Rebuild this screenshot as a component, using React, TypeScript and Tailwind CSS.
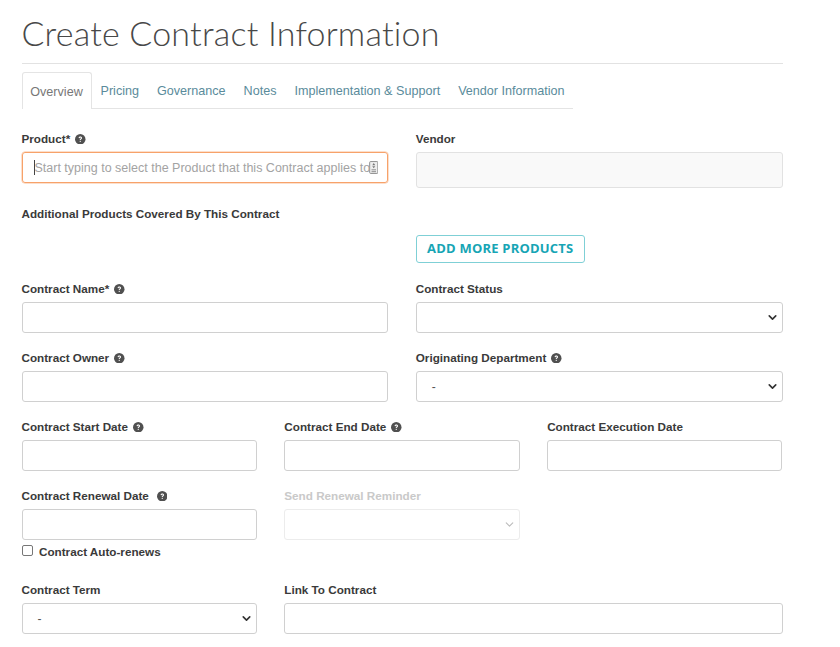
import { ChevronDown } from 'lucide-react';

function Help({ className = '' }: { className?: string }) {
  return (
    <svg viewBox="0 0 16 16" className={`w-[10.5px] h-[10.5px] ${className}`}>
      <circle cx="8" cy="8" r="8" fill="#505050" />
      <path d="M5.4 6.2c0-1.5 1.2-2.4 2.7-2.4s2.6.9 2.6 2.2c0 1.9-2 1.9-2 3.2H7.2c0-2 1.8-2.1 1.8-3.1 0-.5-.4-.8-.9-.8-.6 0-1 .4-1 1z" fill="#fff" />
      <rect x="7.2" y="10.4" width="1.6" height="1.7" fill="#fff" />
    </svg>
  );
}

function Label({ text, help, gap = 'ml-[5px]', disabled }: { text: string; help?: boolean; gap?: string; disabled?: boolean }) {
  return (
    <div className={`h-[14px] flex items-center text-[11.7px] font-bold leading-none ${disabled ? 'text-[#c9c9c9]' : 'text-[#3a3a3a]'}`}>
      {text}
      {help && <Help className={gap} />}
    </div>
  );
}

function Input() {
  return <div className="mt-[6px] h-[31px] rounded-[3px] border border-[#d0d0d0] bg-white" />;
}

function Select({ value, disabled }: { value?: string; disabled?: boolean }) {
  return (
    <div className={`mt-[6px] h-[31px] rounded-[3px] border flex items-center justify-between pl-[15px] pr-[3px] text-[12px] ${disabled ? 'border-[#ececec]' : 'border-[#d0d0d0]'} text-[#555]`}>
      <span>{value}</span>
      <ChevronDown className={`w-[13px] h-[13px] ${disabled ? 'text-[#bbb]' : 'text-[#333]'}`} strokeWidth={disabled ? 2 : 3} />
    </div>
  );
}

const tabs = ['Pricing', 'Governance', 'Notes', 'Implementation & Support', 'Vendor Information'];

export default function App() {
  return (
    <div className="w-[840px] h-[647px] overflow-hidden bg-white pl-[21.5px] font-['Liberation_Sans',Arial,sans-serif]">
      <div className="w-[761px]">
        <div className="h-[64px] border-b border-[#e2e2e2] pt-[10px]">
          <h1 className="font-['Lato',sans-serif] font-light text-[34px] leading-[46px] tracking-[0.2px] text-[#484848]">
            Create Contract Information
          </h1>
        </div>

        <div className="mt-[8px] w-[551px] h-[37px] flex border-b border-[#e4e4e4] text-[12.6px]">
          <div className="h-[37px] w-[70px] shrink-0 rounded-t-[3px] border border-b-0 border-[#e4e4e4] bg-white flex items-center justify-center text-[#777] pt-[2px]">
            Overview
          </div>
          <div className="flex gap-[18px] ml-[9px] pt-[12px] text-[#5a8b9b]">
            {tabs.map((t) => (
              <span key={t} className="whitespace-nowrap leading-[15px]">{t}</span>
            ))}
          </div>
        </div>

        <div className="mt-[23px] grid grid-cols-2 gap-x-[27.5px]">
          <div>
            <Label text="Product*" help />
            <div className="mt-[6px] h-[31px] rounded-[3px] border border-[#f7a26a] shadow-[0_0_0_0.5px_#f9c09a] flex items-center pl-[11px] pr-[9px] text-[12.5px] text-[#a3a3a3] overflow-hidden">
              <span className="w-px h-[15px] bg-[#444] shrink-0" />
              <span className="whitespace-nowrap overflow-hidden w-[334px] pt-[1px]">Start typing to select the Product that this Contract applies to</span>
              <svg viewBox="0 0 10 14" className="w-[9.5px] h-[13px] shrink-0">
                <rect x="0.6" y="0.6" width="8.8" height="12.8" rx="1" fill="#eee" stroke="#888" strokeWidth="1" />
                <path d="M5 2.2 6.6 4.6H3.4zM5 7.8 3.4 5.6h3.2z" fill="#777" />
                <rect x="2.6" y="9" width="4.8" height="1" fill="#888" />
                <rect x="2.6" y="11" width="4.8" height="1" fill="#888" />
              </svg>
            </div>
          </div>
          <div>
            <Label text="Vendor" />
            <div className="mt-[6px] h-[36px] rounded-[3px] border border-[#e2e2e2] bg-[#f9f9f9]" />
          </div>
        </div>

        <div className="mt-[19px]">
          <Label text="Additional Products Covered By This Contract" />
        </div>
        <div className="mt-[14px] grid grid-cols-2 gap-x-[27.5px]">
          <div />
          <div>
            <button className="h-[28px] w-[169px] rounded-[3px] border-[1.5px] border-[#7fd0d6] text-[#17a5b5] text-[13px] font-bold tracking-[0.2px] font-['Open_Sans',sans-serif]">
              ADD MORE PRODUCTS
            </button>
          </div>
        </div>

        <div className="mt-[19px] grid grid-cols-2 gap-x-[27.5px]">
          <div>
            <Label text="Contract Name*" help />
            <Input />
          </div>
          <div>
            <Label text="Contract Status" />
            <Select />
          </div>
        </div>

        <div className="mt-[18px] grid grid-cols-2 gap-x-[27.5px]">
          <div>
            <Label text="Contract Owner" help />
            <Input />
          </div>
          <div>
            <Label text="Originating Department" help />
            <Select value="-" />
          </div>
        </div>

        <div className="mt-[18px] grid grid-cols-3 gap-x-[27.5px]">
          <div>
            <Label text="Contract Start Date" help />
            <Input />
          </div>
          <div>
            <Label text="Contract End Date" help />
            <Input />
          </div>
          <div>
            <Label text="Contract Execution Date" />
            <Input />
          </div>
        </div>

        <div className="mt-[18px] grid grid-cols-3 gap-x-[27.5px]">
          <div>
            <Label text="Contract Renewal Date" help gap="ml-2" />
            <Input />
            <div className="mt-[5px] h-[14px] flex items-center text-[11.7px] font-bold text-[#3a3a3a]">
              <span className="w-[11px] h-[11px] rounded-[2px] border border-[#777] bg-white mr-[6.5px] -mt-[3px]" />
              Contract Auto-renews
            </div>
          </div>
          <div>
            <Label text="Send Renewal Reminder" disabled />
            <Select disabled />
          </div>
        </div>

        <div className="mt-[24px] grid grid-cols-3 gap-x-[27.5px]">
          <div>
            <Label text="Contract Term" />
            <Select value="-" />
          </div>
          <div className="col-span-2">
            <Label text="Link To Contract" />
            <Input />
          </div>
        </div>
      </div>
    </div>
  );
}
